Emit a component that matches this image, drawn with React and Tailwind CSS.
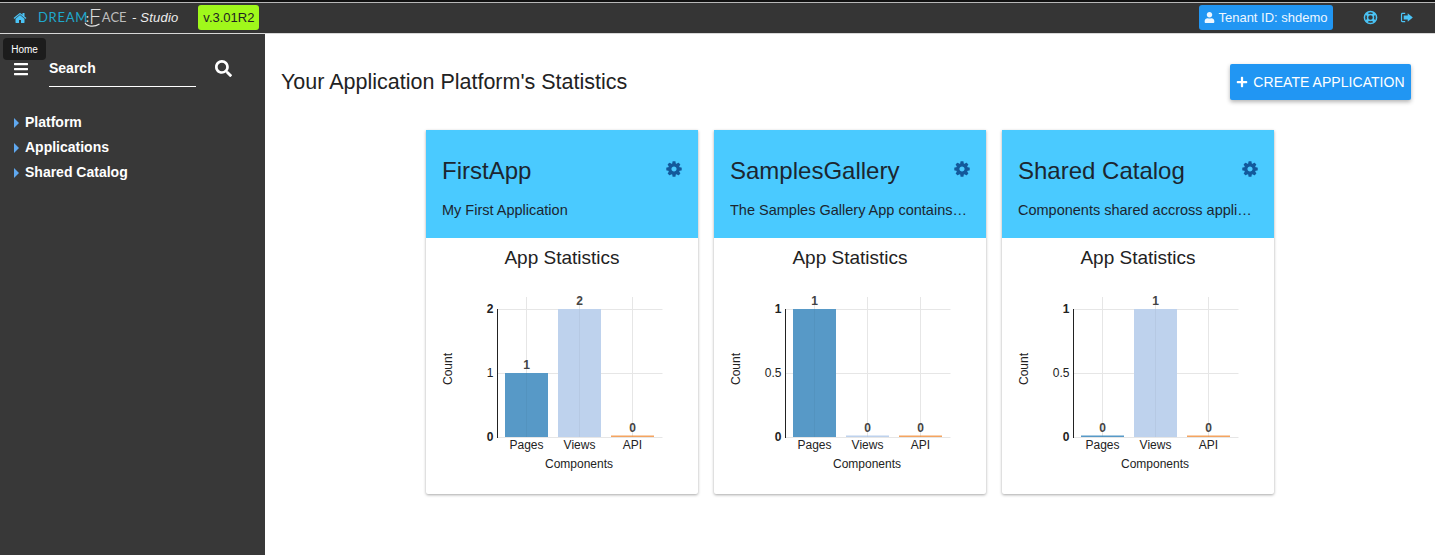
import React from "react";
import { FaUser, FaBars, FaSearch, FaPlus } from "react-icons/fa";

const F = { fontFamily: '"Liberation Sans", Arial, sans-serif' };

const COG = "M1152 896q0-106-75-181t-181-75-181 75-75 181 75 181 181 75 181-75 75-181zm512-109v222q0 12-8 23t-20 13l-185 28q-19 54-39 91 35 50 107 138 10 12 10 25t-9 23q-27 37-99 108t-94 71q-12 0-26-9l-138-108q-44 23-91 38-16 136-29 186-7 28-36 28h-222q-14 0-24.500-8.500t-11.500-21.500l-28-184q-49-16-90-37l-141 107q-10 9-25 9-14 0-25-11-126-114-165-168-7-10-7-23 0-12 8-23 15-21 51-66.500t54-70.500q-27-50-41-99l-183-27q-13-2-21-12.500t-8-23.500v-222q0-12 8-23t19-13l186-28q14-46 39-92-40-57-107-138-10-12-10-24 0-10 9-23 26-36 98.500-107.500t94.500-71.500q13 0 26 10l138 107q44-23 91-38 16-136 29-186 7-28 36-28h222q14 0 24.500 8.500t11.500 21.500l28 184q49 16 90 37l142-107q9-9 24-9 13 0 25 10 129 119 165 170 7 8 7 22 0 12-8 23-15 21-51 66.500t-54 70.500q26 50 41 98l183 28q13 2 21 12.500t8 23.500z";
const HOME = "M1472 992v480q0 26-19 45t-45 19h-384v-384h-256v384h-384q-26 0-45-19t-19-45v-480q0-1 .5-3t.5-3l575-474 575 474q1 2 1 6zm223-69l-62 74q-8 9-21 11h-3q-13 0-21-7l-692-577-692 577q-12 8-24 7-13-2-21-11l-62-74q-8-10-7-23.500t11-21.500l719-599q32-26 76-26t76 26l244 204v-195q0-14 9-23t23-9h192q14 0 23 9t9 23v408l219 182q10 8 11 21.500t-7 23.500z";

function Fa({ d, size, className }) {
  return (
    <svg viewBox="0 0 1792 1792" width={size} height={size} className={className} fill="currentColor">
      <path d={d} />
    </svg>
  );
}

function LifeRing({ className }) {
  return (
    <svg viewBox="0 0 16 16" width="15" height="15" className={className} fill="none" stroke="currentColor">
      <circle cx="8" cy="8" r="6.500" strokeWidth="1.600" />
      <circle cx="8" cy="8" r="3.200" strokeWidth="1.600" />
      <path strokeWidth="3" d="M3.400 3.400L5.800 5.800M12.600 3.400L10.200 5.800M3.400 12.600L5.800 10.200M12.600 12.600L10.200 10.200" />
    </svg>
  );
}

function SignOut({ className }) {
  return (
    <svg viewBox="0 0 14 14" width="13" height="13" className={className} fill="currentColor">
      <path d="M5.600 1.800H2.600C1.700 1.800 1 2.500 1 3.400V10.600C1 11.500 1.700 12.200 2.600 12.200H5.600V10.900H2.800C2.500 10.900 2.300 10.700 2.300 10.400V3.600C2.300 3.300 2.500 3.100 2.800 3.100H5.600Z" />
      <path d="M8.300 2.400L13.800 7L8.300 11.600V9.200H4V4.800H8.300Z" />
    </svg>
  );
}

function Chart({ ticks, values, labels }) {
  const max = Math.max(...values);
  const x0 = 71.5, top = 23, bot = 151;
  const cols = [x0 + 29, x0 + 82, x0 + 135];
  const colors = ["#5799c7", "#bed2ed", "#f4a460"];
  return (
    <svg width="272" height="200" className="block" style={{ fontFamily: '"Liberation Sans", Arial, sans-serif' }}>
      {ticks.map((t, i) => {
        const y = bot - (bot - top) * (t / max);
        return <line key={i} x1={x0} x2={x0 + 165} y1={y + 0.5} y2={y + 0.5} stroke="#e6e6e6" />;
      })}
      {cols.map((c, i) => <line key={i} x1={c} x2={c} y1={top - 12} y2={bot} stroke="#e6e6e6" />)}
      {values.map((v, i) => {
        const h = v === 0 ? 1.5 : (bot - top) * (v / max);
        return (
          <g key={i}>
            <rect x={cols[i] - 21.5} y={bot - h} width="43" height={h} fill={colors[i]} />
            <line x1={cols[i]} x2={cols[i]} y1={bot - h} y2={bot} stroke="#000" strokeOpacity="0.04" />
            <text x={cols[i]} y={bot - h - 4} textAnchor="middle" fontSize="12" fontWeight="bold" fill="#444">{v}</text>
            <text x={cols[i]} y={bot + 12} textAnchor="middle" fontSize="12" fill="#222">{labels[i]}</text>
          </g>
        );
      })}
      <line x1={x0} x2={x0} y1={top} y2={bot + 1} stroke="#222" />
      {ticks.map((t, i) => {
        const y = bot - (bot - top) * (t / max);
        const bold = t === 0 || t === max;
        return <text key={i} x={x0 - 4} y={y + 4} textAnchor="end" fontSize="12" fontWeight={bold ? "bold" : "normal"} fill="#222">{t}</text>;
      })}
      <text transform="translate(26,83) rotate(-90)" textAnchor="middle" fontSize="12" fill="#222">Count</text>
      <text x={153} y={bot + 31} textAnchor="middle" fontSize="12" fill="#222">Components</text>
    </svg>
  );
}

function Card({ title, desc, ticks, values }) {
  return (
    <div className="w-[272px] h-[364px] bg-white rounded-b-[2px] shadow-[0_1px_3px_rgba(0,0,0,0.35)] overflow-hidden">
      <div className="h-[108px] bg-[#4acaff] px-4 pt-[26px] text-[#1c2630]">
        <div className="flex justify-between items-start">
          <div className="text-[24px] leading-[30px]">{title}</div>
          <Fa d={COG} size={18} className="text-[#13599b] mt-[4px] mr-[-1px]" />
        </div>
        <div className="mt-[14px] text-[14.5px] leading-[20px] truncate">{desc}</div>
      </div>
      <div className="text-center text-[19px] leading-[24px] text-[#222] mt-[8px]">App Statistics</div>
      <div className="mt-[16px]"><Chart ticks={ticks} values={values} labels={["Pages", "Views", "API"]} /></div>
    </div>
  );
}

function Logo() {
  const font = { fontFamily: 'Lato, "Liberation Sans", sans-serif' };
  return (
    <div className="relative ml-[11px] w-[88px] h-[24px] flex items-center" style={font}>
      <span className="text-[#1fa8cc] text-[13px] tracking-[0.7px] leading-none w-[48px] font-normal">DREAM</span>
      <span className="text-[#dcdcdc] text-[11px] leading-none w-[3px] font-bold">:</span>
      <span className="text-[#dcdcdc] text-[22px] leading-none w-[10px] font-light mt-[-4px]">F</span>
      <span className="text-[#bdbdbd] text-[13px] leading-none ml-[3px] font-normal">ACE</span>
      <svg width="17" height="6" viewBox="0 0 17 6" className="absolute left-[46px] top-[16px]" fill="none" stroke="#e8e8e8" strokeWidth="1.100">
        <path d="M1 .800C3 4.500 10 5.500 15.500 2" />
      </svg>
    </div>
  );
}

export default function App() {
  return (
    <div className="w-[1435px] h-[555px] overflow-hidden bg-white flex flex-col relative" style={F}>
      <header className="h-[34px] shrink-0 bg-[#353535] border-t-2 border-t-[#111] border-b border-b-[#d8d8d8] shadow-[inset_0_1px_0_#b8b8b8] flex items-center pl-[13px] text-white">
        <Fa d={HOME} size={14} className="text-[#4ac3f5]" />
        <Logo />
        <span className="ml-[6px] text-[13px] italic text-[#eee] tracking-[0.2px]">- Studio</span>
        <div className="ml-[20px] h-[25px] w-[61px] bg-[#a0f81b] rounded-[3px] text-[#222] text-[13px] flex items-center justify-center">v.3.01R2</div>
        <div className="ml-auto h-[25px] w-[134px] bg-[#2196f3] rounded-[3px] text-[13px] text-[#eef7ff] flex items-center justify-center gap-[3px]">
          <FaUser size={11} /> Tenant ID: shdemo
        </div>
        <LifeRing className="text-[#4ac3f5] ml-[30px]" />
        <SignOut className="text-[#4ac3f5] ml-[22px] mr-[22px]" />
      </header>
      <div className="flex flex-1 min-h-0">
        <aside className="w-[265px] shrink-0 bg-[#383838] text-white pt-[21px] pl-[13px]">
          <div className="flex items-start h-[32px]">
            <FaBars size={16} className="mt-[6px]" />
            <div className="ml-[20px] w-[147px] h-[32px] border-b border-white text-[14px] font-bold leading-[26px]">Search</div>
            <FaSearch className="ml-[19px] mt-[5px]" size={17} />
          </div>
          <ul className="mt-[23px] text-[14px] font-bold">
            {["Platform", "Applications", "Shared Catalog"].map((t) => (
              <li key={t} className="h-[25px] flex items-center">
                <span className="w-0 h-0 border-y-[5px] border-y-transparent border-l-[5px] border-l-[#5fa8f0] ml-[1px]" />
                <span className="ml-[6px]">{t}</span>
              </li>
            ))}
          </ul>
        </aside>
        <main className="flex-1 min-w-0">
          <div className="flex items-center justify-between pl-[16px] pr-[24px] pt-[30px]">
            <h1 className="text-[21.5px] leading-[36px] text-[#222]">Your Application Platform's Statistics</h1>
            <button className="h-[36px] w-[181px] bg-[#2196f3] rounded-[2px] text-white text-[14px] tracking-[0.05px] flex items-center justify-center gap-[5px] shadow-[0_2px_4px_rgba(0,0,0,0.3)]">
              <FaPlus size={12} /> CREATE APPLICATION
            </button>
          </div>
          <div className="flex gap-[16px] pl-[161px] mt-[30px]">
            <Card title="FirstApp" desc="My First Application" ticks={[0, 1, 2]} values={[1, 2, 0]} />
            <Card title="SamplesGallery" desc="The Samples Gallery App contains examples" ticks={[0, 0.5, 1]} values={[1, 0, 0]} />
            <Card title="Shared Catalog" desc="Components shared accross applications" ticks={[0, 0.5, 1]} values={[0, 1, 0]} />
          </div>
        </main>
      </div>
      <div className="absolute left-[3px] top-[38px] h-[22px] w-[43px] bg-[#1c1c1c] rounded-[4px] text-white text-[10px] flex items-center justify-center">Home</div>
    </div>
  );
}
